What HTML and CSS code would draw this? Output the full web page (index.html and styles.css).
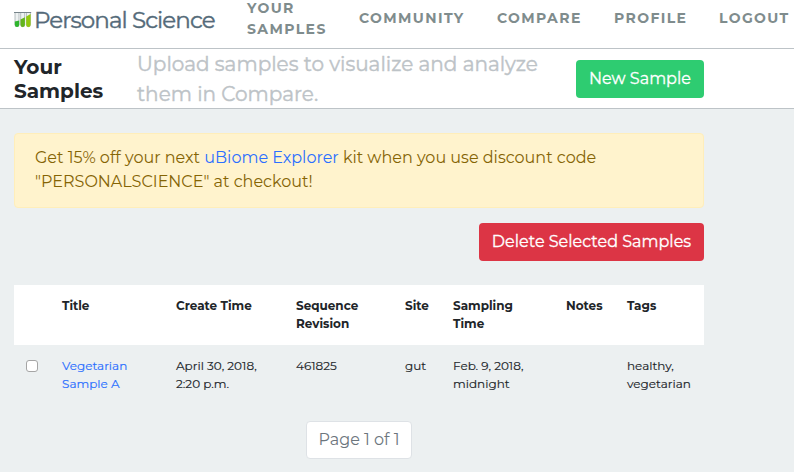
FILE: index.html
```html
<!DOCTYPE html>
<html lang="en">
<head>
<meta charset="utf-8">
<title>Personal Science</title>
<link rel="stylesheet" href="styles.css">
</head>
<body>
<header class="navbar">
  <a class="brand" href="#">
    <svg class="logo" viewBox="0 0 18 17" width="18" height="17">
      <path d="M1 1.5v12.2a2 2 0 0 0 4 0V1.5zM6.7 1.5v12.2a2 2 0 0 0 4 0V1.5zM12.4 1.5v12.2a2 2 0 0 0 4 0V1.5z" fill="#eef2f2" stroke="#a3adb0" stroke-width=".8"/>
      <path d="M.8 10.4l4.4-1v4.3a2.2 2.2 0 0 1-4.4 0z" fill="#2fb52d"/>
      <path d="M6.5 8.6l4.4-2.4v7.5a2.2 2.2 0 0 1-4.4 0z" fill="#62b51c"/>
      <path d="M12.2 5.4l4.4-2.4v10.7a2.2 2.2 0 0 1-4.4 0z" fill="#93c90e"/>
      <path d="M0 1.5h17.2" stroke="#78858b" stroke-width="1"/>
    </svg>
    <span class="brand-name">Personal Science</span>
  </a>
  <nav class="nav">
    <a class="your" href="#">YOUR<br>SAMPLES</a>
    <a class="community" href="#">COMMUNITY</a>
    <a class="compare" href="#">COMPARE</a>
    <a class="profile" href="#">PROFILE</a>
    <a class="logout" href="#">LOGOUT</a>
  </nav>
</header>
<section class="heading">
  <h1>Your<br>Samples</h1>
  <p class="lead">Upload samples to visualize and analyze<br>them in Compare.</p>
  <a class="btn new" href="#">New Sample</a>
</section>
<main>
  <div class="alert">Get 15% off your next <a href="#">uBiome Explorer</a> kit when you use discount code<br>"PERSONALSCIENCE" at checkout!</div>
  <div class="actions"><a class="btn delete" href="#">Delete Selected Samples</a></div>
  <table>
    <colgroup><col class="c-check"><col class="c-title"><col class="c-create"><col class="c-seq"><col class="c-site"><col class="c-sampling"><col class="c-notes"><col class="c-tags"></colgroup>
    <thead><tr><th></th><th>Title</th><th>Create Time</th><th>Sequence<br>Revision</th><th>Site</th><th>Sampling<br>Time</th><th>Notes</th><th>Tags</th></tr></thead>
    <tbody><tr>
      <td><input type="checkbox" aria-label="Select sample"></td>
      <td><a href="#">Vegetarian<br>Sample A</a></td>
      <td>April 30, 2018,<br>2:20 p.m.</td>
      <td>461825</td>
      <td>gut</td>
      <td>Feb. 9, 2018,<br>midnight</td>
      <td></td>
      <td>healthy,<br>vegetarian</td>
    </tr></tbody>
  </table>
  <div class="pagination"><span class="page">Page 1 of 1</span></div>
</main>
</body>
</html>
```
FILE: styles.css
```css
* { box-sizing: border-box; }
body {
  margin: 0;
  min-height: 472px;
  overflow: hidden;
  background: #ecf0f1;
  color: #212529;
  font: 16px/24px Montserrat, Inter, sans-serif;
}
a { color: #2b6fff; text-decoration: none; }

.navbar {
  display: flex;
  align-items: center;
  height: 49px;
  background: #fff;
  border-bottom: 1px solid #bdc3c7;
}
.brand {
  display: flex;
  align-items: center;
  width: 247px;
  height: 39px;
  padding-left: 14px;
  margin-bottom: 9px;
  flex: none;
}
.logo { flex: none; margin-right: 2px; }
.brand-name {
  color: #546a79;
  font-size: 23px;
  letter-spacing: -.92px;
  white-space: nowrap;
  -webkit-text-stroke: .4px #546a79;
}
.nav {
  display: flex;
  align-items: center;
  height: 42px;
  margin-bottom: 11px;
}
.nav a {
  flex: none;
  color: #7f8c8d;
  font-size: 14px;
  font-weight: 700;
  line-height: 21px;
  letter-spacing: 1.4px;
  white-space: nowrap;
}
.nav .your { width: 112px; }
.nav .community { width: 138px; }
.nav .compare { width: 117px; }
.nav .profile { width: 105px; }

.heading {
  display: flex;
  height: 60px;
  padding-left: 14px;
  background: #fff;
  border-bottom: 1px solid #bdc3c7;
}
h1 {
  width: 123px;
  margin: 6px 0 0;
  font-size: 20px;
  line-height: 24px;
  font-weight: 700;
}
.lead {
  width: 439px;
  margin: 0;
  color: #bdc3c7;
  font-size: 20px;
  line-height: 30px;
  white-space: nowrap;
  -webkit-text-stroke: .4px #bdc3c7;
}
.btn {
  height: 38px;
  padding: 7px 0;
  border-radius: 4px;
  color: #fff;
  line-height: 24px;
  text-align: center;
  white-space: nowrap;
  -webkit-text-stroke: .3px #fff;
}
.new { width: 128px; margin-top: 11px; background: #2ecc71; }

main { width: 704px; padding: 24px 0 0 14px; }
.alert {
  height: 75px;
  padding: 12px 20px;
  border: 1px solid #ffeeba;
  border-radius: 4px;
  background: #fff3cd;
  color: #856404;
  white-space: nowrap;
}
.actions { display: flex; justify-content: flex-end; margin-top: 15px; }
.delete { width: 225px; background: #dc3545; }

table {
  width: 690px;
  margin-top: 24px;
  border-collapse: collapse;
  table-layout: fixed;
  font-size: 12px;
  line-height: 18px;
}
.c-check { width: 36px; }
.c-title { width: 114px; }
.c-create { width: 120px; }
.c-seq { width: 109px; }
.c-site { width: 48px; }
.c-sampling { width: 113px; }
.c-notes { width: 61px; }
.c-tags { width: 89px; }
th, td {
  height: 60px;
  padding: 12px 0 12px 12px;
  text-align: left;
  vertical-align: top;
  white-space: nowrap;
}
th { background: #fff; font-weight: 700; }
td { -webkit-text-stroke: .15px; }
td input {
  display: block;
  appearance: none;
  width: 12px;
  height: 12px;
  margin: 3px 0 0;
  border: 1px solid #a5a5a5;
  border-radius: 3px;
  background: #fff;
}
.pagination { display: flex; justify-content: center; margin-top: 16px; }
.page {
  width: 106px;
  height: 38px;
  padding: 6px 0;
  border: 1px solid #dee2e6;
  border-radius: 4px;
  background: #fff;
  color: #6c757d;
  text-align: center;
}
```
